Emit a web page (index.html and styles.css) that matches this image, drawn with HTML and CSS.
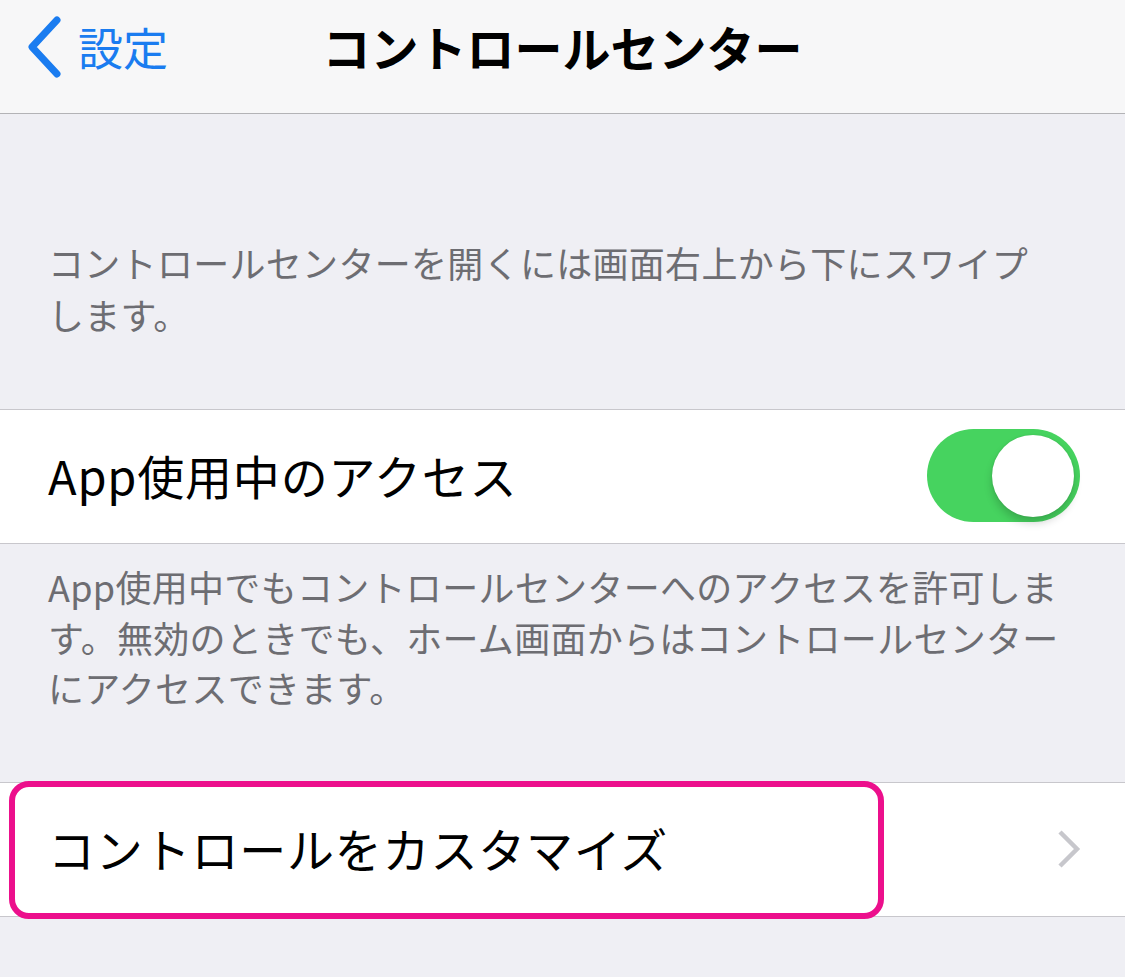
FILE: index.html
```html
<!DOCTYPE html>
<html lang="ja">
    <head>
        <meta charset="UTF-8" />
        <meta name="viewport" content="width=device-width, initial-scale=1.0" />
        <title>コントロールセンター</title>
        <link rel="stylesheet" href="styles.css">
    </head>
    <body>
        <div class="navbar">
            <div class="back">
                <svg class="back-chevron" width="36" height="64" viewBox="0 0 36 64">
                    <path d="M31 5 L6 32 L31 59" fill="none" stroke="#1a7cf0" stroke-width="7" stroke-linecap="round" stroke-linejoin="round" />
                </svg>
                <span class="back-label">設定</span>
            </div>
            <h1 class="nav-title">コントロールセンター</h1>
        </div>

        <p class="group-header">コントロールセンターを開くには画面右上から下にスワイプします。</p>

        <div class="cell">
            <span class="cell-label">App使用中のアクセス</span>
            <div class="toggle on"><div class="knob"></div></div>
        </div>
        <p class="group-footer">App使用中でもコントロールセンターへのアクセスを許可します。無効のときでも、ホーム画面からはコントロールセンターにアクセスできます。</p>

        <div class="cell cell-link">
            <span class="cell-label">コントロールをカスタマイズ</span>
            <svg class="disclosure" width="26" height="40" viewBox="0 0 26 40">
                <path d="M4 3 L21 20 L4 37" fill="none" stroke="#c7c7cc" stroke-width="4.5" />
            </svg>
            <!-- highlight annotation -->
            <div class="highlight"></div>
        </div>
    </body>
</html>
```

FILE: styles.css
```css
* {
    box-sizing: border-box;
    font-family: "Noto Sans CJK JP", "Noto Sans", sans-serif;
}
body {
    margin: 0;
    background-color: #efeff4;
    width: 1125px;
    height: 977px;
    overflow: hidden;
}
.navbar {
    height: 114px;
    background-color: #f7f7f8;
    border-bottom: 1px solid #b3b3b6;
    position: relative;
    display: flex;
    align-items: center;
    justify-content: center;
}
.back {
    position: absolute;
    left: 26px;
    top: 15px;
    display: flex;
    align-items: center;
    gap: 16px;
}
.back-chevron {
    display: block;
}
.back-label {
    color: #1a7cf0;
    font-size: 45px;
    line-height: 64px;
}
.nav-title {
    margin: 0 0 22px 0;
    font-size: 48px;
    font-weight: 700;
    color: #000;
    letter-spacing: 0;
}
.group-header,
.group-footer {
    margin: 0;
    color: #6d6d72;
    font-size: 36px;
    line-height: 52px;
    letter-spacing: 0.3px;
    padding: 0 48px;
}
.group-header {
    padding-top: 122px;
    padding-right: 80px;
    margin-bottom: 69px;
}
.group-footer {
    line-height: 50.5px;
    padding-top: 17px;
    padding-right: 52px;
    margin-bottom: 69px;
}
.cell {
    position: relative;
    height: 135px;
    background-color: #fff;
    border-top: 1px solid #c8c7cc;
    border-bottom: 1px solid #c8c7cc;
    display: flex;
    align-items: center;
    justify-content: space-between;
    padding: 0 45px 0 48px;
}
.cell-label {
    font-size: 47px;
    color: #000;
    letter-spacing: 0.8px;
    margin-bottom: 4px;
}
.toggle {
    position: relative;
    width: 153px;
    height: 93px;
    border-radius: 47px;
    background-color: #46d35f;
    margin-bottom: 3px;
}
.knob {
    position: absolute;
    top: 6px;
    right: 6px;
    width: 82px;
    height: 82px;
    border-radius: 50%;
    background-color: #fff;
    box-shadow: 0 6px 8px rgba(0, 0, 0, 0.18), 0 0 2px rgba(0, 0, 0, 0.12);
}
.disclosure {
    display: block;
}
.cell-link {
    padding-right: 43px;
}
.highlight {
    position: absolute;
    left: 9px;
    top: -2px;
    width: 875px;
    height: 138px;
    border: 6px solid #ec0f8c;
    border-radius: 20px;
}
```
